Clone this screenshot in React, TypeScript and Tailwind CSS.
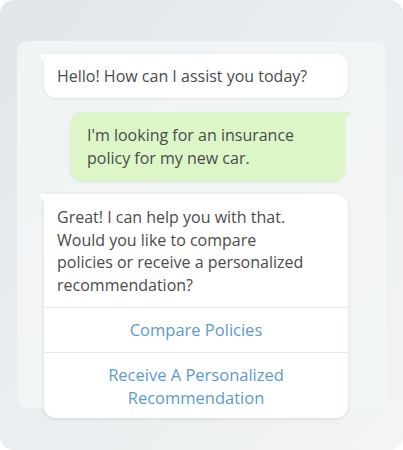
import React from "react";

const FONT = { fontFamily: '"Open Sans", "Noto Sans", sans-serif' };

const Tail = ({ side, color }: { side: "left" | "right"; color: string }) => (
  <svg
    width="8"
    height="10"
    viewBox="0 0 8 10"
    className={`absolute top-0 ${side === "left" ? "-left-[6px]" : "-right-[6px] -scale-x-100"}`}
  >
    <path d="M0 0 H8 V10 Z" fill={color} />
  </svg>
);

export default function App() {
  return (
    <div className="w-[403px] h-[450px] bg-white" style={FONT}>
      <div className="w-full h-full rounded-[14px] overflow-hidden bg-gradient-to-br from-[#e2e6e8] via-[#ebeef0] to-[#f2f4f5] pt-[41px] px-[17px]">
        <div className="h-[367px] rounded-[10px] bg-[#f4f6f7]/80 pt-[13px] pl-[27px] pr-[38px]">
          <div className="flex flex-col">
            <div className="relative bg-white rounded-[12px] rounded-tl-none px-[13px] py-[11px] text-[16px] leading-[22px] text-[#4b4b4b] shadow-[0_1px_3px_rgba(0,0,0,0.08)]">
              <Tail side="left" color="#ffffff" />
              Hello! How can I assist you today?
            </div>

            <div className="relative mt-[14px] ml-[26px] mr-[3px] bg-[#dcf6c8] rounded-[12px] rounded-tr-none px-[17px] py-[12px] text-[16px] leading-[22.5px] text-[#4b4b4b] shadow-[0_1px_3px_rgba(0,0,0,0.08)]">
              <Tail side="right" color="#dcf6c8" />
              I'm looking for an insurance
              <br />
              policy for my new car.
            </div>

            <div className="relative mt-[13px] bg-white rounded-[12px] rounded-tl-none text-[16px] text-[#4b4b4b] shadow-[0_1px_4px_rgba(0,0,0,0.1)]">
              <Tail side="left" color="#ffffff" />
              <div className="px-[13px] pt-[12px] pb-[11px] leading-[22.5px]">
                Great! I can help you with that.
                <br />
                Would you like to compare
                <br />
                policies or receive a personalized
                <br />
                recommendation?
              </div>
              <div className="border-t border-[#e8e8e8] h-[45px] flex items-center justify-center text-[16.5px] font-medium text-[#5c9ccb]">
                Compare Policies
              </div>
              <div className="border-t border-[#e8e8e8] h-[66px] flex items-center justify-center text-center text-[16.5px] leading-[23px] font-medium text-[#5c9ccb]">
                Receive A Personalized
                <br />
                Recommendation
              </div>
            </div>
          </div>
        </div>
      </div>
    </div>
  );
}
